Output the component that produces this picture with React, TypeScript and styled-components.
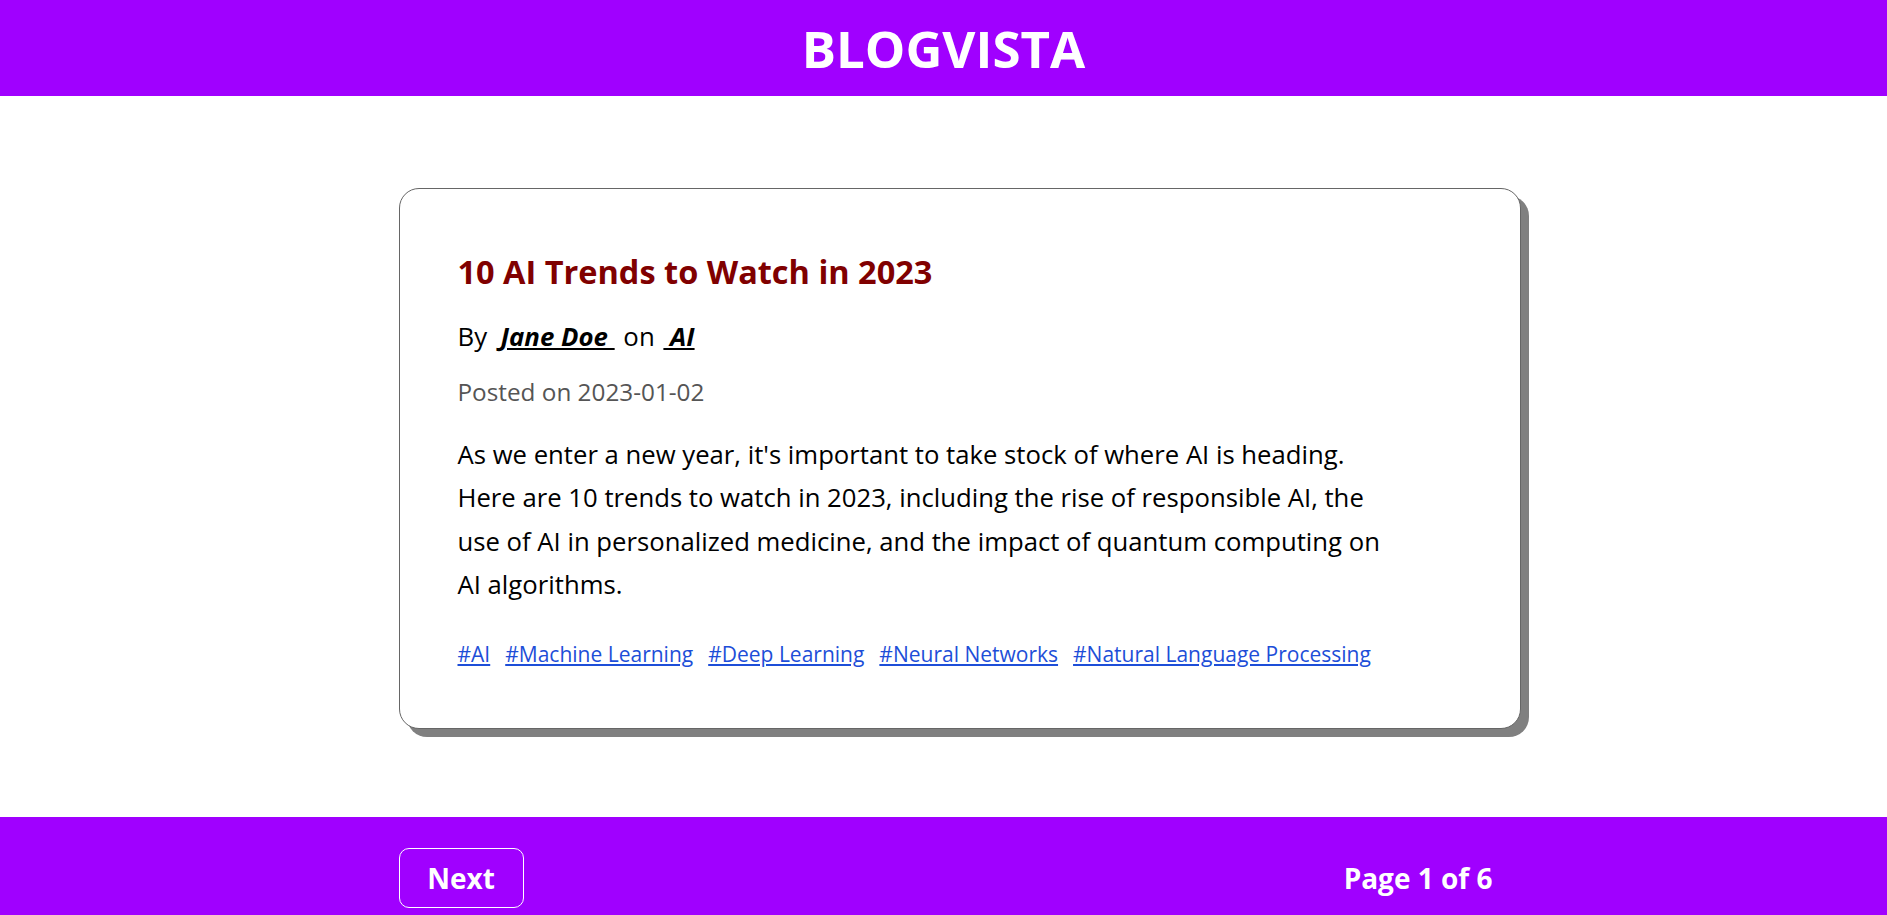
import React from "react";
import styled, { createGlobalStyle } from "styled-components";

const GlobalStyle = createGlobalStyle`
  html { scrollbar-width: none; }
  html::-webkit-scrollbar { display: none; }
  body {
    margin: 0;
    font-family: "Open Sans", "Noto Sans", sans-serif;
    background: #ffffff;
    color: #000000;
  }
  * { box-sizing: border-box; }
`;

const Header = styled.header`
  height: 96px;
  background: #a000ff;
  display: flex;
  align-items: center;
  justify-content: center;
`;

const Brand = styled.h1`
  margin: 0;
  color: #ffffff;
  font-size: 51px;
  font-weight: 700;
  line-height: 1;
`;

const Main = styled.main`
  padding: 92px 0 88px;
`;

const Column = styled.div`
  width: 1122px;
  margin-left: calc(50% - 545px);
`;

const Card = styled.article`
  border: 1px solid #666666;
  border-radius: 20px;
  box-shadow: 8px 8px 0 #808080;
  padding: 63px 58px 60px;
  background: #ffffff;
`;

const Title = styled.h2`
  margin: 0;
  color: #800000;
  font-size: 32.5px;
  font-weight: 700;
  line-height: 40px;
`;

const Byline = styled.p`
  margin: 28px 0 0;
  font-size: 25.8px;
  line-height: 32px;
`;

const Author = styled.a`
  color: #000000;
  font-weight: 700;
  font-style: italic;
  text-decoration: underline;
  white-space: pre;
`;

const Joiner = styled.span`
  margin: 0 2px;
`;

const Posted = styled.p`
  margin: 24px 0 0;
  font-size: 24.3px;
  line-height: 32px;
  color: #555555;
`;

const Body = styled.p`
  margin: 25px 0 0;
  font-size: 25.7px;
  line-height: 43.3px;
`;

const Tags = styled.div`
  margin-top: 34px;
  display: flex;
  flex-wrap: wrap;
  gap: 15px;
`;

const Tag = styled.a`
  color: #1d4ed8;
  font-size: 21px;
  line-height: 28px;
  text-decoration: underline;
`;

const Footer = styled.footer`
  background: #a000ff;
  padding: 31px 0;
`;

const FooterRow = styled(Column)`
  display: flex;
  align-items: center;
  justify-content: space-between;
  padding-right: 28px;
`;

const NextButton = styled.button`
  width: 125px;
  height: 60px;
  border: 1px solid #ffffff;
  border-radius: 10px;
  background: transparent;
  color: #ffffff;
  font-family: inherit;
  font-size: 28px;
  font-weight: 700;
  cursor: pointer;
`;

const PageInfo = styled.span`
  color: #ffffff;
  font-size: 28px;
  font-weight: 700;
`;

const tags = [
  "#AI",
  "#Machine Learning",
  "#Deep Learning",
  "#Neural Networks",
  "#Natural Language Processing",
];

export default function App() {
  return (
    <>
      <GlobalStyle />
      <Header>
        <Brand>BLOGVISTA</Brand>
      </Header>
      <Main>
        <Column>
          <Card>
            <Title>10 AI Trends to Watch in 2023</Title>
            <Byline>
              By&nbsp; <Author href="#">Jane Doe </Author>
              <Joiner> on </Joiner>
              <Author href="#"> AI</Author>
            </Byline>
            <Posted>Posted on 2023-01-02</Posted>
            <Body>
              As we enter a new year, it's important to take stock of where AI is heading.
              <br />
              Here are 10 trends to watch in 2023, including the rise of responsible AI, the
              <br />
              use of AI in personalized medicine, and the impact of quantum computing on
              <br />
              AI algorithms.
            </Body>
            <Tags>
              {tags.map((t) => (
                <Tag key={t} href="#">
                  {t}
                </Tag>
              ))}
            </Tags>
          </Card>
        </Column>
      </Main>
      <Footer>
        <FooterRow>
          <NextButton>Next</NextButton>
          <PageInfo>Page 1 of 6</PageInfo>
        </FooterRow>
      </Footer>
    </>
  );
}
